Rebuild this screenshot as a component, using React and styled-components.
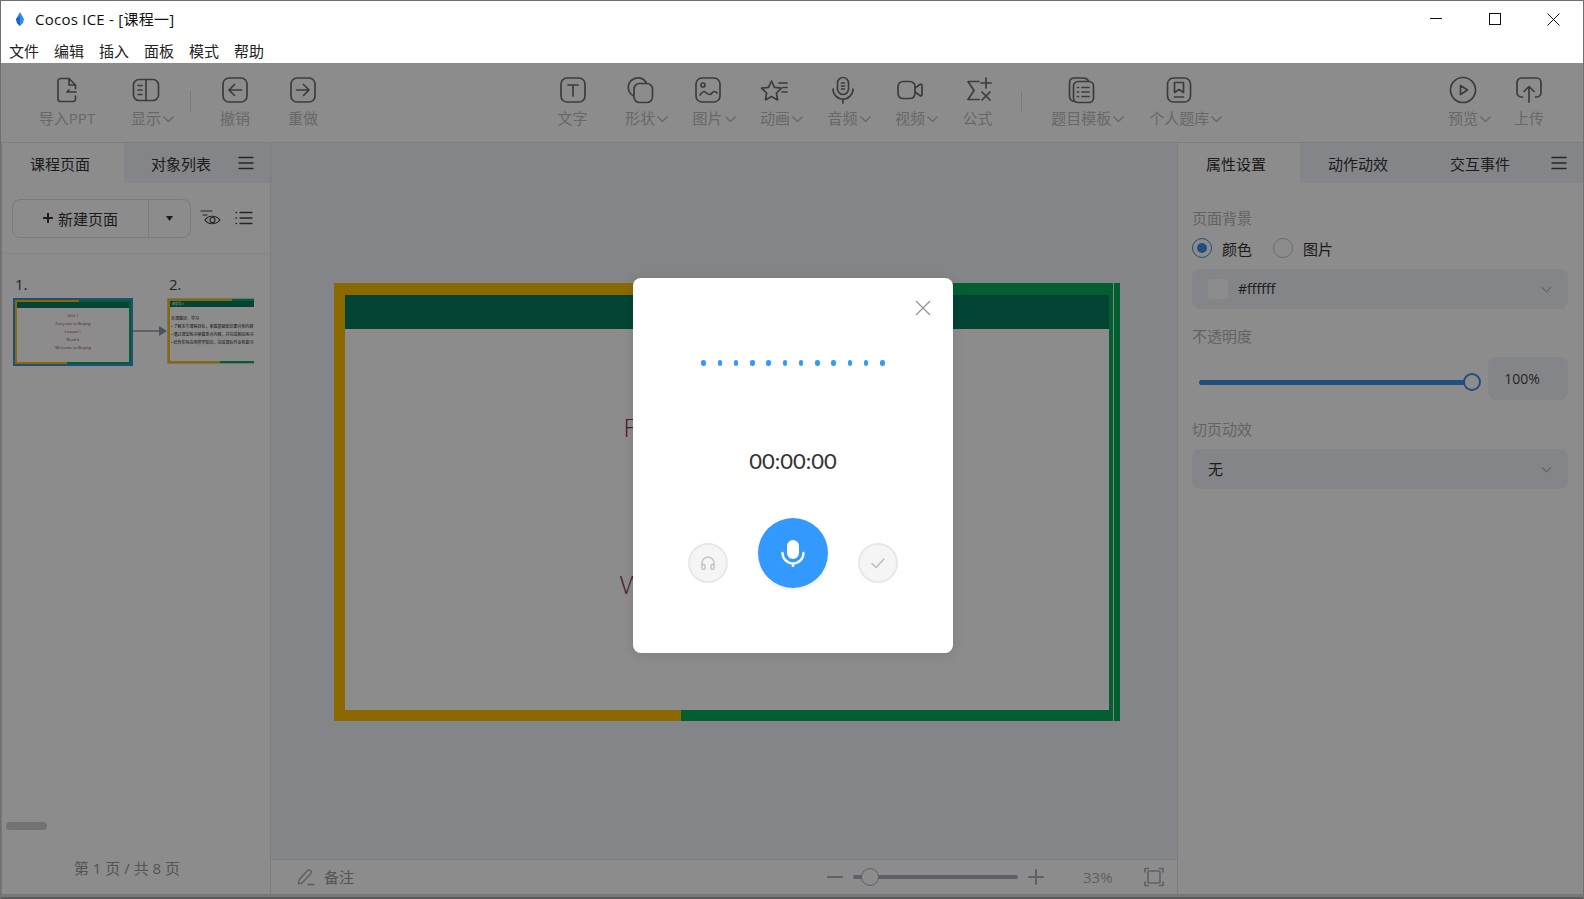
import React from 'react';
import styled, { createGlobalStyle } from 'styled-components';

const GlobalStyle = createGlobalStyle`
  html, body {
    margin: 0;
    padding: 0;
    background: #fff;
  }
  * {
    box-sizing: border-box;
  }
  body {
    font-family: "Open Sans", "Noto Sans CJK SC", sans-serif;
    font-size: 15px;
    color: #333;
  }
`;

const AppWindow = styled.div`
  width: 1584px;
  height: 899px;
  display: flex;
  flex-direction: column;
  border: 1px solid #707070;
  border-bottom: none;
  overflow: hidden;
`;

const TitleBar = styled.div`
  height: 36px;
  display: flex;
  align-items: center;
  padding-left: 12px;
  background: #fff;
  color: #111;
`;

const AppTitle = styled.div`
  margin: -2px 0 0 8px;
  font-size: 15px;
  letter-spacing: 0.25px;
  flex: 1;
`;

const WindowButton = styled.div`
  width: 59px;
  height: 36px;
  display: flex;
  align-items: center;
  justify-content: center;
`;

const MenuBar = styled.div`
  height: 26px;
  display: flex;
  align-items: center;
  padding: 1px 0 0 8px;
  gap: 15px;
  background: #fff;
  color: #222;
`;

const MenuItem = styled.span`
  width: 30px;
  font-size: 15px;
  white-space: nowrap;
`;

const Body = styled.div`
  position: relative;
  flex: 1;
  display: flex;
  flex-direction: column;
  min-height: 0;
`;

const Overlay = styled.div`
  position: absolute;
  inset: 0;
  display: flex;
  justify-content: center;
  padding-left: 2px;
  background: rgba(0, 0, 0, 0.45);
`;

const Toolbar = styled.div`
  height: 80px;
  flex: none;
  display: flex;
  justify-content: space-between;
  padding: 0 21px 0 32px;
  background: #fff;
  border-bottom: 1px solid #e6e6e6;
`;

const ToolGroup = styled.div`
  display: flex;
  align-items: flex-start;
`;

const ToolItem = styled.div`
  width: ${props => props.$w || 68}px;
  margin-right: ${props => props.$mr || 0}px;
  display: flex;
  flex-direction: column;
  align-items: center;
  padding-top: 12px;
`;

const ToolIcon = styled.svg`
  width: 30px;
  height: 30px;
  display: block;
  fill: none;
  stroke: #6e6e6e;
  stroke-width: 1.7;
  stroke-linecap: round;
  stroke-linejoin: round;
`;

const ToolLabel = styled.div`
  display: flex;
  align-items: center;
  margin-top: 3px;
  font-size: 15px;
  line-height: 20px;
  color: #bdbdbd;
  white-space: nowrap;
`;

const ToolCaret = styled.svg`
  width: 15px;
  height: 15px;
  margin-right: -15px;
  fill: none;
  stroke: #bdbdbd;
  stroke-width: 1.3;
`;

const ToolSeparator = styled.div`
  width: 1px;
  height: 20px;
  margin: 28px 10px 0;
  background: #dcdcdc;
`;

const Workspace = styled.div`
  flex: 1;
  display: flex;
  min-height: 0;
`;

const LeftPanel = styled.div`
  width: 270px;
  flex: none;
  display: flex;
  flex-direction: column;
  background: #fff;
  border-left: 1px solid #d8d8d8;
  border-right: 1px solid #e3e5ea;
`;

const TabRow = styled.div`
  height: 40px;
  flex: none;
  display: flex;
  align-items: stretch;
  background: #f1f3f8;
`;

const Tab = styled.div`
  width: ${props => props.$w}px;
  padding-right: ${props => props.$pr || 0}px;
  display: flex;
  align-items: center;
  justify-content: center;
  font-size: 15px;
  color: #333;
  background: ${props => (props.$active ? '#fff' : 'transparent')};
`;

const TabMenu = styled.div`
  flex: 1;
  display: flex;
  align-items: center;
  padding-left: ${props => props.$pl || 0}px;
`;

const PlainIcon = styled.svg`
  display: block;
  fill: none;
  stroke: ${props => props.$color || '#555'};
  stroke-width: ${props => props.$sw || 1.5};
  stroke-linecap: round;
  stroke-linejoin: round;
`;

const PageTools = styled.div`
  height: 71px;
  flex: none;
  display: flex;
  align-items: center;
  padding: 0 12px 0 10px;
  border-bottom: 1px solid #eceef2;
`;

const NewPageButton = styled.div`
  width: 179px;
  height: 39px;
  display: flex;
  border: 1px solid #dfe1e6;
  border-radius: 8px;
`;

const NewPageMain = styled.div`
  width: 136px;
  display: flex;
  align-items: center;
  justify-content: center;
  gap: 5px;
  font-size: 15px;
  color: #333;
  border-right: 1px solid #dfe1e6;
`;

const NewPageCaret = styled.div`
  flex: 1;
  display: flex;
  align-items: center;
  justify-content: center;
`;

const PageToolIcons = styled.div`
  display: flex;
  align-items: center;
  gap: 13px;
  margin-left: 9px;
`;

const ThumbList = styled.div`
  flex: 1;
  display: flex;
  align-items: flex-start;
  padding: 20px 0 0 11px;
  overflow: hidden;
`;

const ThumbColumn = styled.div`
  flex: none;
  width: ${props => props.$w}px;
  overflow: hidden;
`;

const ThumbNumber = styled.div`
  height: 24px;
  padding-left: 2px;
  font-size: 15px;
  line-height: 20px;
  color: #444;
`;

const ThumbLink = styled.svg`
  width: 34px;
  height: 12px;
  margin-top: 51px;
  flex: none;
`;

const ThumbFrame = styled.div`
  width: ${props => props.$w}px;
  height: ${props => props.$h}px;
  padding: 2px;
  background:
    linear-gradient(to right, #ffc000 55%, #09ae58 55%) top / 100% 50% no-repeat,
    linear-gradient(to right, #ffc000 45%, #09ae58 45%) bottom / 100% 50% no-repeat;
  outline: ${props => (props.$selected ? '2px solid #3a8fdc' : '1px solid #cfcfcf')};
  margin: ${props => (props.$selected ? '2px' : '1px')};
  display: flex;
  flex-direction: column;
  overflow: hidden;
`;

const ThumbPaper = styled.div`
  flex: 1;
  display: flex;
  flex-direction: column;
  background: #fff;
  min-height: 0;
`;

const ThumbHeader = styled.div`
  height: 6px;
  flex: none;
  background: #077d60;
  color: #fff;
  font-size: 3px;
  line-height: 6px;
  padding-left: 2px;
`;

const ThumbTitles = styled.div`
  flex: 1;
  display: flex;
  flex-direction: column;
  align-items: center;
  justify-content: center;
  gap: 3.8px;
  padding-bottom: 6px;
  color: #a03060;
  font-size: 4px;
  line-height: 4px;
  white-space: nowrap;
`;

const ThumbLines = styled.div`
  padding: 8px 0 0 1px;
  color: #222;
  font-size: 4px;
  line-height: 8px;
  white-space: nowrap;
`;

const ScrollSpace = styled.div`
  height: 32px;
  flex: none;
  padding: 0 0 0 4px;
`;

const ScrollThumb = styled.div`
  width: 41px;
  height: 8px;
  border-radius: 4px;
  background: #cfcfcf;
`;

const PageCount = styled.div`
  height: 40px;
  flex: none;
  display: flex;
  align-items: flex-start;
  justify-content: center;
  padding: 4px 18px 0 0;
  font-size: 15px;
  line-height: 20px;
  color: #999;
`;

const Center = styled.div`
  flex: 1;
  display: flex;
  flex-direction: column;
  min-width: 0;
  background: #f1f3f8;
`;

const Stage = styled.div`
  flex: 1;
  padding: 140px 0 0 63px;
  min-height: 0;
`;

const Slide = styled.div`
  position: relative;
  width: 786px;
  height: 438px;
  padding: 12px 11px 11px 11px;
  display: flex;
  background:
    linear-gradient(to right, #ffc000 55%, #09ae58 55%) top / 100% 50% no-repeat,
    linear-gradient(to right, #ffc000 44.2%, #09ae58 44.2%) bottom / 100% 50% no-repeat;

  &::after {
    content: '';
    position: absolute;
    top: 0;
    bottom: 0;
    right: 6px;
    width: 1px;
    background: #e8f3ed;
  }
`;

const SlidePaper = styled.div`
  flex: 1;
  display: flex;
  flex-direction: column;
  background: #fff;
`;

const SlideHeader = styled.div`
  height: 34px;
  flex: none;
  background: #077d60;
`;

const SlideTitles = styled.div`
  flex: 1;
  display: flex;
  flex-direction: column;
  align-items: center;
  padding-top: 19px;
  font-family: "Lato", sans-serif;
  font-weight: 300;
  font-size: 25.75px;
  line-height: 52.5px;
  color: #962c55;
  white-space: nowrap;
`;

const StatusBar = styled.div`
  height: 35px;
  flex: none;
  display: flex;
  align-items: center;
  padding: 0 0 1px 26px;
  border-top: 1px solid #e3e5ea;
  background: #fff;
`;

const NoteLabel = styled.div`
  margin-left: 9px;
  font-size: 15px;
  color: #999;
`;

const ZoomSlider = styled.div`
  position: relative;
  width: 165px;
  height: 4px;
  margin: 0 10px;
  background: #a9b0bd;
  border-radius: 2px;
`;

const ZoomKnob = styled.div`
  position: absolute;
  top: -7px;
  left: 8px;
  width: 18px;
  height: 18px;
  border-radius: 50%;
  background: #fff;
  border: 1px solid #a9b0bd;
`;

const ZoomCluster = styled.div`
  margin-left: auto;
  display: flex;
  align-items: center;
`;

const ZoomValue = styled.div`
  width: 34px;
  margin: 0 27px 0 39px;
  font-size: 15px;
  color: #a9b0bd;
  white-space: nowrap;
`;

const FitBox = styled.div`
  margin-right: 13px;
`;

const RightPanel = styled.div`
  width: 406px;
  flex: none;
  display: flex;
  flex-direction: column;
  background: #fff;
  border-left: 1px solid #e3e5ea;
`;

const Props = styled.div`
  flex: 1;
  padding: 25px 15px 0 14px;
`;

const FieldLabel = styled.div`
  height: 20px;
  font-size: 15px;
  line-height: 20px;
  color: #b5b5b5;
`;

const RadioRow = styled.div`
  height: 20px;
  margin-top: 10px;
  display: flex;
  align-items: center;
`;

const Radio = styled.div`
  width: 20px;
  height: 20px;
  flex: none;
  display: flex;
  align-items: center;
  justify-content: center;
  border-radius: 50%;
  background: #fff;
  border: 1px solid ${props => (props.$on ? '#3a8fdc' : '#c4c4c4')};

  &::after {
    content: '';
    width: 10px;
    height: 10px;
    border-radius: 50%;
    background: ${props => (props.$on ? '#3d8fe0' : 'transparent')};
  }
`;

const RadioText = styled.span`
  margin: 0 21px 0 10px;
  font-size: 15px;
  color: #333;
`;

const SelectBox = styled.div`
  height: 40px;
  margin-top: ${props => props.$mt}px;
  display: flex;
  align-items: center;
  padding: 0 16px 0 16px;
  background: #f1f3f8;
  border-radius: 8px;
  font-size: 15px;
  color: #333;
`;

const Swatch = styled.div`
  width: 20px;
  height: 20px;
  margin-right: 10px;
  background: #fff;
  border-radius: 4px;
`;

const SelectText = styled.span`
  flex: 1;
  margin-top: -1px;
  font-size: ${props => props.$size || 15}px;
`;

const OpacityRow = styled.div`
  height: 43px;
  margin-top: 11px;
  display: flex;
  align-items: center;
`;

const OpacityTrack = styled.div`
  position: relative;
  width: 273px;
  height: 5px;
  margin: 8px 0 0 7px;
  background: #3d8fe0;
  border-radius: 3px;
`;

const OpacityKnob = styled.div`
  position: absolute;
  right: -9px;
  top: -7px;
  width: 18px;
  height: 18px;
  border-radius: 50%;
  background: #fff;
  border: 2.5px solid #3d8fe0;
`;

const OpacityValue = styled.div`
  width: 80px;
  height: 43px;
  margin-left: 16px;
  padding-right: 12px;
  display: flex;
  align-items: center;
  justify-content: center;
  background: #f1f3f8;
  border-radius: 8px;
  font-size: 14px;
  color: #444;
`;

const SpacedLabel = styled(FieldLabel)`
  margin-top: ${props => props.$mt}px;
`;

const BottomStrip = styled.div`
  height: 5px;
  flex: none;
  background: #dcdde0;
  border-bottom: 2px solid #a8a8a8;
`;

const Modal = styled.div`
  position: relative;
  width: 320px;
  height: 375px;
  margin-top: 215px;
  padding-top: 82px;
  background: #fff;
  border-radius: 8px;
  box-shadow: 0 2px 12px rgba(0, 0, 0, 0.1);
`;

const CloseButton = styled.svg`
  position: absolute;
  top: 22px;
  right: 22px;
  width: 16px;
  height: 16px;
  stroke: #999;
  stroke-width: 1.4;
  fill: none;
`;

const Wave = styled.div`
  height: 6px;
  display: flex;
  justify-content: center;
  gap: 11.77px;
`;

const WaveDot = styled.span`
  width: 4.5px;
  height: 6px;
  border-radius: 2.25px;
  background: #3399ff;
`;

const Timer = styled.div`
  margin-top: 80px;
  font-family: "Lato", sans-serif;
  font-size: 22px;
  line-height: 30px;
  text-align: center;
  color: #333;
`;

const Controls = styled.div`
  margin-top: 42px;
  display: flex;
  justify-content: center;
  align-items: flex-end;
  gap: 30px;
`;

const SideControl = styled.div`
  width: 40px;
  height: 40px;
  margin-bottom: 5px;
  display: flex;
  align-items: center;
  justify-content: center;
  border-radius: 50%;
  background: #f5f5f5;
  border: 2px solid #e8e8e8;
`;

const RecordControl = styled.div`
  width: 70px;
  height: 70px;
  display: flex;
  align-items: center;
  justify-content: center;
  border-radius: 50%;
  background: #3399ff;
  box-shadow: 0 2px 4px rgba(0, 0, 0, 0.08);
`;

const Caret = () => (
  <ToolCaret viewBox="0 0 15 15"><path d="M2.5 5.5 L7.5 10.5 L12.5 5.5" /></ToolCaret>
);

const ICONS = {
  import: <><path d="M17 3.5H8.5A2.5 2.5 0 0 0 6 6v18a2.500 2.500 0 0 0 2.500 2.500H21a2.500 2.500 0 0 0 2.500-2.500v-3" /><path d="M17 3.500l6.500 6.500v3.500M17 3.500V10h6.500" /><path d="M24 17h-9M17 15l-2 2" /></>,
  layout: <><rect x="2.5" y="4.5" width="25" height="21" rx="5.5" /><path d="M15 4.5v21M7 10.5h4M7 15h4M7 19.5h4" /></>,
  undo: <><rect x="3" y="3" width="24" height="24" rx="6" /><path d="M21.5 15H9M14.5 9.5 9 15l5.5 5.5" /></>,
  redo: <><rect x="3" y="3" width="24" height="24" rx="6" /><path d="M8.5 15H21M15.5 9.5 21 15l-5.5 5.5" /></>,
  text: <><rect x="3" y="3" width="24" height="24" rx="6" /><path d="M10 10h10M15 10v11" /></>,
  shape: <><path d="M8 20.500A9.500 9.500 0 1 1 21 7.500" /><rect x="9" y="8.500" width="18.500" height="19" rx="5.500" /></>,
  image: <><rect x="3" y="3" width="24" height="24" rx="6" /><circle cx="10" cy="10" r="2" /><path d="M7 20c2.5-4 4.5-4 6.5-2s4 2 5.5 0 3.500-2 5 0" /></>,
  anim: <><path d="M11.500 6l3 6.300 6.900.9-5 4.800 1.200 6.900-6.100-3.300-6.100 3.300 1.200-6.900-5-4.800 6.900-.9z" /><path d="M19 8h8M23 12.500h4M22 17h5" /></>,
  audio: <><rect x="9.500" y="2.500" width="11" height="17" rx="5.500" /><path d="M16.500 8h-3M16.500 11h-3M16.500 14h-3" /><path d="M5 14a10 10 0 0 0 20 0M15 24v4" /></>,
  video: <><rect x="3" y="6.500" width="17" height="17" rx="5" /><path d="M20 13l5-3.500a1.200 1.200 0 0 1 2 1v9a1.200 1.200 0 0 1-2 1L20 17" /></>,
  formula: <><path d="M16 6.500H5l6 9-6 9h11" /><path d="M23 3v10M18 8h10M19 17l8 8M27 17l-8 8" /></>,
  template: <><path d="M8 26.500C5 26 3.500 24 3.500 21V8c0-3 2-5 5-5h9c2.500 0 4 1 5 3" /><rect x="7.500" y="6.500" width="20" height="21" rx="4.500" /><path d="M11.500 12.500h1M16 12.500h7M11.500 17h1M16 17h7M11.500 21.500h1M16 21.500h7" /></>,
  person: <><rect x="3.500" y="3" width="23" height="24" rx="6" /><path d="M10.500 7.500h9v10l-4.500-3-4.500 3zM10.500 22h9" /></>,
  play: <><circle cx="15" cy="15" r="12.500" /><path d="M12.500 10.500v9l7-4.500z" /></>,
  upload: <><path d="M8.500 22H7.500A4.500 4.500 0 0 1 3 17.500V7.500A4.500 4.500 0 0 1 7.500 3h15A4.500 4.500 0 0 1 27 7.500v10a4.500 4.500 0 0 1-4.500 4.500h-1" /><path d="M15 27V12M10 16.500l5-5 5 5" /></>,
};

const Tool = ({ icon, label, caret, w, mr }) => (
  <ToolItem $w={w} $mr={mr}>
    <ToolIcon viewBox="0 0 30 30">{ICONS[icon]}</ToolIcon>
    <ToolLabel>{label}{caret && <Caret />}</ToolLabel>
  </ToolItem>
);

const Hamburger = () => (
  <PlainIcon $color="#444" $sw={1.4} width="16" height="14" viewBox="0 0 16 14">
    <path d="M1 1.500h14M1 7h14M1 12.500h14" />
  </PlainIcon>
);

const SelectCaret = () => (
  <PlainIcon $color="#b0b0b0" $sw={1.2} width="11" height="11" viewBox="0 0 12 12">
    <path d="M1.500 4l4.500 4.500L10.500 4" />
  </PlainIcon>
);

const MicGlyph = ({ size, color }) => (
  <svg width={size} height={size} viewBox="0 0 28 28" fill="none">
    <rect x="8" y="1" width="12" height="19" rx="6" fill={color} />
    <path d="M3.500 14a10.500 10.500 0 0 0 21 0M14 24.500V28" stroke={color} strokeWidth="2.400" strokeLinecap="round" />
  </svg>
);

export default function App() {
  return (
    <>
      <GlobalStyle />
      <AppWindow>
        <TitleBar>
          <svg width="14" height="16" viewBox="0 0 14 16">
            <path d="M7 1 L11 8 L10 12 L7 15 L4 12 L3 8 Z" fill="#2f8cf0" />
            <path d="M7 5 L7 15 L4 12 L3 8 Z" fill="#1c62c4" />
          </svg>
          <AppTitle>Cocos ICE - [课程一]</AppTitle>
          <WindowButton>
            <svg width="12" height="12" viewBox="0 0 12 12"><path d="M0 5.500h12" stroke="#111" fill="none" /></svg>
          </WindowButton>
          <WindowButton>
            <svg width="12" height="12" viewBox="0 0 12 12"><rect x="0.500" y="0.500" width="11" height="11" stroke="#111" fill="none" /></svg>
          </WindowButton>
          <WindowButton>
            <svg width="13" height="13" viewBox="0 0 13 13"><path d="M0.500 0.500l12 12M12.500 0.500l-12 12" stroke="#111" fill="none" /></svg>
          </WindowButton>
        </TitleBar>
        <MenuBar>
          {['文件', '编辑', '插入', '面板', '模式', '帮助'].map(m => <MenuItem key={m}>{m}</MenuItem>)}
        </MenuBar>

        <Body>
          <Toolbar>
            <ToolGroup>
              <Tool icon="import" label="导入PPT" mr={11} />
              <Tool icon="layout" label="显示" caret />
              <ToolSeparator />
              <Tool icon="undo" label="撤销" />
              <Tool icon="redo" label="重做" />
            </ToolGroup>
            <ToolGroup>
              <Tool icon="text" label="文字" w={67.5} />
              <Tool icon="shape" label="形状" caret w={67.5} />
              <Tool icon="image" label="图片" caret w={67.5} />
              <Tool icon="anim" label="动画" caret w={67.5} />
              <Tool icon="audio" label="音频" caret w={67.5} />
              <Tool icon="video" label="视频" caret w={67.5} />
              <Tool icon="formula" label="公式" w={67.5} />
              <ToolSeparator />
              <Tool icon="template" label="题目模板" caret w={98} />
              <Tool icon="person" label="个人题库" caret w={98} />
            </ToolGroup>
            <ToolGroup>
              <Tool icon="play" label="预览" caret w={66} />
              <Tool icon="upload" label="上传" w={66} />
            </ToolGroup>
          </Toolbar>

          <Workspace>
            <LeftPanel>
              <TabRow>
                <Tab $active $w={122} $pr={6}>课程页面</Tab>
                <Tab $w={114}>对象列表</Tab>
                <TabMenu><Hamburger /></TabMenu>
              </TabRow>
              <PageTools>
                <NewPageButton>
                  <NewPageMain>
                    <PlainIcon $color="#333" $sw={2} width="10" height="10" viewBox="0 0 10 10"><path d="M5 0.500v9M0.500 5h9" /></PlainIcon>
                    新建页面
                  </NewPageMain>
                  <NewPageCaret>
                    <svg width="7" height="5" viewBox="0 0 7 5"><path d="M0 0h7L3.500 5z" fill="#333" /></svg>
                  </NewPageCaret>
                </NewPageButton>
                <PageToolIcons>
                  <PlainIcon $color="#444" $sw={1.2} width="22" height="18" viewBox="0 0 22 18">
                    <path d="M1 2h11M3 6h4" />
                    <path d="M5 11c3-5 11-5 15 0-4 5-12 5-15 0z" />
                    <circle cx="12.500" cy="11" r="2.500" />
                  </PlainIcon>
                  <PlainIcon $color="#444" $sw={1.3} width="18" height="14" viewBox="0 0 18 14">
                    <path d="M1 1.500h.5M5 1.500h12M1 7h.5M5 7h12M1 12.500h.5M5 12.500h12" />
                  </PlainIcon>
                </PageToolIcons>
              </PageTools>
              <ThumbList>
                <ThumbColumn $w={120}>
                  <ThumbNumber>1.</ThumbNumber>
                  <ThumbFrame $selected $w={116} $h={64}>
                    <ThumbPaper>
                      <ThumbHeader />
                      <ThumbTitles>
                        <span>Unit 1</span>
                        <span>Fairy tale in Beijing</span>
                        <span>Lesson 1</span>
                        <span>Read it</span>
                        <span>Welcome to Beijing</span>
                      </ThumbTitles>
                    </ThumbPaper>
                  </ThumbFrame>
                </ThumbColumn>
                <ThumbLink viewBox="0 0 34 12">
                  <path d="M0 6h26" stroke="#8d98ab" strokeWidth="1.5" />
                  <path d="M26 1l8 5-8 5z" fill="#8d98ab" />
                </ThumbLink>
                <ThumbColumn $w={87}>
                  <ThumbNumber>2.</ThumbNumber>
                  <ThumbFrame $w={116} $h={64}>
                    <ThumbPaper>
                      <ThumbHeader>课堂导入</ThumbHeader>
                      <ThumbLines>
                        <div>本课题目：学习</div>
                        <div>• 了解本节课程目标，掌握基础知识要点和内容</div>
                        <div>• 通过课堂练习掌握重点内容，并完成相应练习</div>
                        <div>• 结合实际应用所学知识，完成课后作业和复习</div>
                      </ThumbLines>
                    </ThumbPaper>
                  </ThumbFrame>
                </ThumbColumn>
              </ThumbList>
              <ScrollSpace><ScrollThumb /></ScrollSpace>
              <PageCount>第 1 页 / 共 8 页</PageCount>
            </LeftPanel>

            <Center>
              <Stage>
                <Slide>
                  <SlidePaper>
                    <SlideHeader />
                    <SlideTitles>
                      <div>Unit 1</div>
                      <div>Fairy tale in Beijing</div>
                      <div>Lesson 1</div>
                      <div>Read it</div>
                      <div>Welcome to Beijing</div>
                    </SlideTitles>
                  </SlidePaper>
                </Slide>
              </Stage>
              <StatusBar>
                <PlainIcon $color="#aaa" $sw={1.3} width="18" height="18" viewBox="0 0 18 18">
                  <path d="M2 12 L10.500 2.500a2 2 0 0 1 3 .2 2 2 0 0 1 .2 3L5 15l-3.500.8zM11 16.500h6" />
                </PlainIcon>
                <NoteLabel>备注</NoteLabel>
                <ZoomCluster>
                  <PlainIcon $color="#a9b0bd" $sw={2} width="16" height="16" viewBox="0 0 16 16"><path d="M1 8h14" /></PlainIcon>
                  <ZoomSlider><ZoomKnob /></ZoomSlider>
                  <PlainIcon $color="#a9b0bd" $sw={2} width="16" height="16" viewBox="0 0 16 16"><path d="M1 8h14M8 1v14" /></PlainIcon>
                  <ZoomValue>33%</ZoomValue>
                  <FitBox>
                    <PlainIcon $color="#a9b0bd" $sw={1.6} width="20" height="20" viewBox="0 0 20 20">
                      <path d="M1 5V1.500h3.500M15.500 1.500H19V5M19 15v3.500h-3.500M4.500 18.500H1V15" />
                      <rect x="4" y="4" width="12" height="12" rx="1" />
                    </PlainIcon>
                  </FitBox>
                </ZoomCluster>
              </StatusBar>
            </Center>

            <RightPanel>
              <TabRow>
                <Tab $active $w={122} $pr={6}>属性设置</Tab>
                <Tab $w={122} $pr={6}>动作动效</Tab>
                <Tab $w={122} $pr={6}>交互事件</Tab>
                <TabMenu $pl={7}><Hamburger /></TabMenu>
              </TabRow>
              <Props>
                <FieldLabel>页面背景</FieldLabel>
                <RadioRow>
                  <Radio $on /><RadioText>颜色</RadioText>
                  <Radio /><RadioText>图片</RadioText>
                </RadioRow>
                <SelectBox $mt={11}>
                  <Swatch />
                  <SelectText $size={14}>#ffffff</SelectText>
                  <SelectCaret />
                </SelectBox>
                <SpacedLabel $mt={17}>不透明度</SpacedLabel>
                <OpacityRow>
                  <OpacityTrack><OpacityKnob /></OpacityTrack>
                  <OpacityValue>100%</OpacityValue>
                </OpacityRow>
                <SpacedLabel $mt={19}>切页动效</SpacedLabel>
                <SelectBox $mt={10}>
                  <SelectText>无</SelectText>
                  <SelectCaret />
                </SelectBox>
              </Props>
            </RightPanel>
          </Workspace>
          <BottomStrip />

          <Overlay>
            <Modal>
              <CloseButton viewBox="0 0 16 16"><path d="M1 1l14 14M15 1L1 15" /></CloseButton>
              <Wave>
                {Array.from({ length: 12 }).map((_, i) => <WaveDot key={i} />)}
              </Wave>
              <Timer>00:00:00</Timer>
              <Controls>
                <SideControl>
                  <PlainIcon $color="#c4c4c4" $sw={1.5} width="16" height="16" viewBox="0 0 16 16">
                    <path d="M2 10V8a6 6 0 0 1 12 0v2" />
                    <rect x="2" y="9.500" width="3" height="5" rx="1.500" />
                    <rect x="11" y="9.500" width="3" height="5" rx="1.500" />
                  </PlainIcon>
                </SideControl>
                <RecordControl><MicGlyph size={28} color="#fff" /></RecordControl>
                <SideControl>
                  <PlainIcon $color="#bdbdbd" $sw={1.5} width="14" height="12" viewBox="0 0 14 12">
                    <path d="M1 6.500L5 10.500 13 2" />
                  </PlainIcon>
                </SideControl>
              </Controls>
            </Modal>
          </Overlay>
        </Body>
      </AppWindow>
    </>
  );
}
